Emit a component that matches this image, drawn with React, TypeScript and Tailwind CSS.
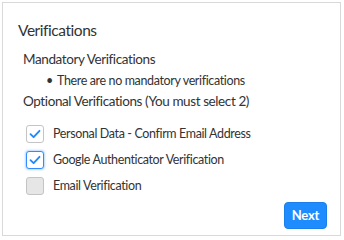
import React from "react";

function Check({ focused, checked }: { focused?: boolean; checked?: boolean }) {
  return (
    <div
      className={
        "shrink-0 w-[18px] h-[18px] rounded-[3px] border flex items-center justify-center " +
        (checked ? "bg-white " : "bg-[#e6e6e6] ") +
        (focused ? "border-[#2f8bff] shadow-[0_0_2px_1px_rgba(47,139,255,0.35)]" : "border-[#c4c4c4]")
      }
    >
      {checked && (
        <svg width="12" height="10" viewBox="0 0 12 10" fill="none">
          <path d="M1.5 5.2 L4.6 8.2 L10.5 1.8" stroke="#1e88ff" strokeWidth="1.8" strokeLinecap="round" strokeLinejoin="round" />
        </svg>
      )}
    </div>
  );
}

function Option({ label, checked, focused }: { label: string; checked?: boolean; focused?: boolean }) {
  return (
    <div className="h-[26px] flex items-center gap-[9px] text-[12.5px] tracking-[-0.37px]">
      <Check checked={checked} focused={focused} />
      <span>{label}</span>
    </div>
  );
}

export default function App() {
  return (
    <div className="w-[344px] h-[240px] bg-white p-[2px] font-[Lato,sans-serif]">
      <div className="w-[339px] h-[234px] border border-[#d9d9d9] flex flex-col text-[#333] pt-[15px] pl-[15px] pr-[13px]">
        <div className="text-[15.5px] tracking-[-0.45px] leading-[24px] h-[24px]">Verifications</div>
        <div className="ml-[5px] mt-[7px] text-[13.5px] tracking-[-0.4px] leading-[20px] h-[20px]">
          Mandatory Verifications
        </div>
        <div className="mt-[3px] flex items-center text-[12.5px] tracking-[-0.37px] leading-[18px] h-[18px] pl-[28px]">
          <span className="shrink-0 w-[11px]">•</span>
          <span>There are no mandatory verifications</span>
        </div>
        <div className="ml-[5px] mt-[2px] text-[13.5px] tracking-[-0.4px] leading-[18px] h-[18px]">
          Optional Verifications (You must select 2)
        </div>
        <div className="mt-[11px] ml-[8px] flex flex-col">
          <Option label="Personal Data - Confirm Email Address" checked />
          <Option label="Google Authenticator Verification" checked focused />
          <Option label="Email Verification" />
        </div>
        <div className="flex justify-end mt-[3px]">
          <button className="w-[43px] h-[27px] rounded-[4px] bg-[#1e8cff] border border-[#1a7fe8] text-white text-[13px] font-bold tracking-[-0.2px]">
            Next
          </button>
        </div>
      </div>
    </div>
  );
}
